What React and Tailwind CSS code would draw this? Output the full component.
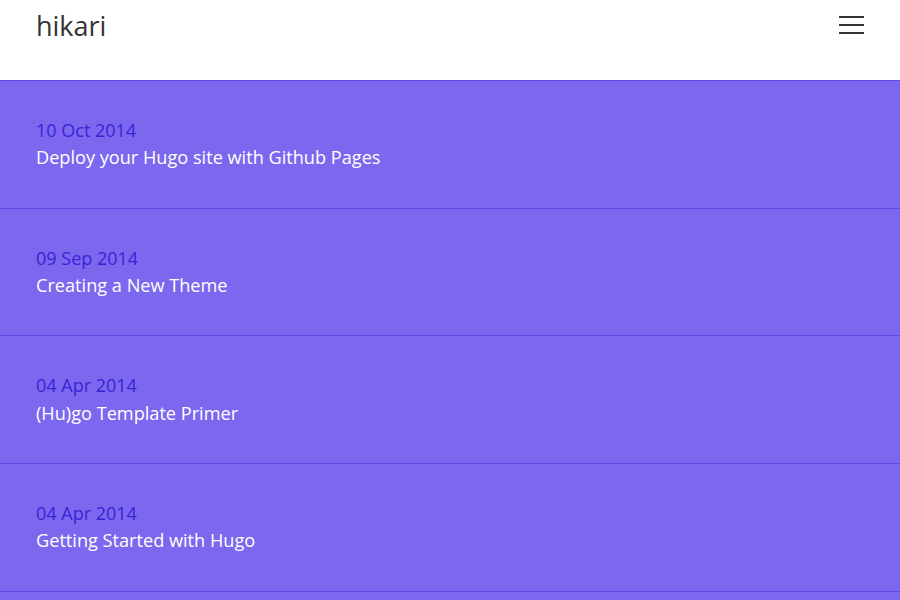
import React from 'react';

const posts = [
  { date: '10 Oct 2014', title: 'Deploy your Hugo site with Github Pages' },
  { date: '09 Sep 2014', title: 'Creating a New Theme' },
  { date: '04 Apr 2014', title: '(Hu)go Template Primer' },
  { date: '04 Apr 2014', title: 'Getting Started with Hugo' },
];

const App = () => {
  return (
    <div className="min-h-screen bg-[#7b68ee]" style={{ fontFamily: '"Open Sans", sans-serif' }}>
      <header className="h-[80px] bg-white flex items-start justify-between pl-[36px] pr-[36px]">
        <a href="#" className="text-[27px] leading-[52px] text-[#333]">hikari</a>
        <button className="mt-[16px] w-[25px] flex flex-col gap-[6px]" aria-label="menu">
          <span className="block h-[2px] w-full bg-[#333]" />
          <span className="block h-[2px] w-full bg-[#333]" />
          <span className="block h-[2px] w-full bg-[#333]" />
        </button>
      </header>

      <ul className="border-b border-[#5f4ae6]">
        {posts.map((post, i) => (
          <li key={i} className="border-t border-[#5f4ae6] px-[36px] py-[36px]">
            <div className="text-[18px] leading-[27.33px] text-[#3b22d6]">{post.date}</div>
            <a href="#" className="block text-[18.15px] leading-[27.33px] text-white">{post.title}</a>
          </li>
        ))}
      </ul>
    </div>
  );
};

export default App;
